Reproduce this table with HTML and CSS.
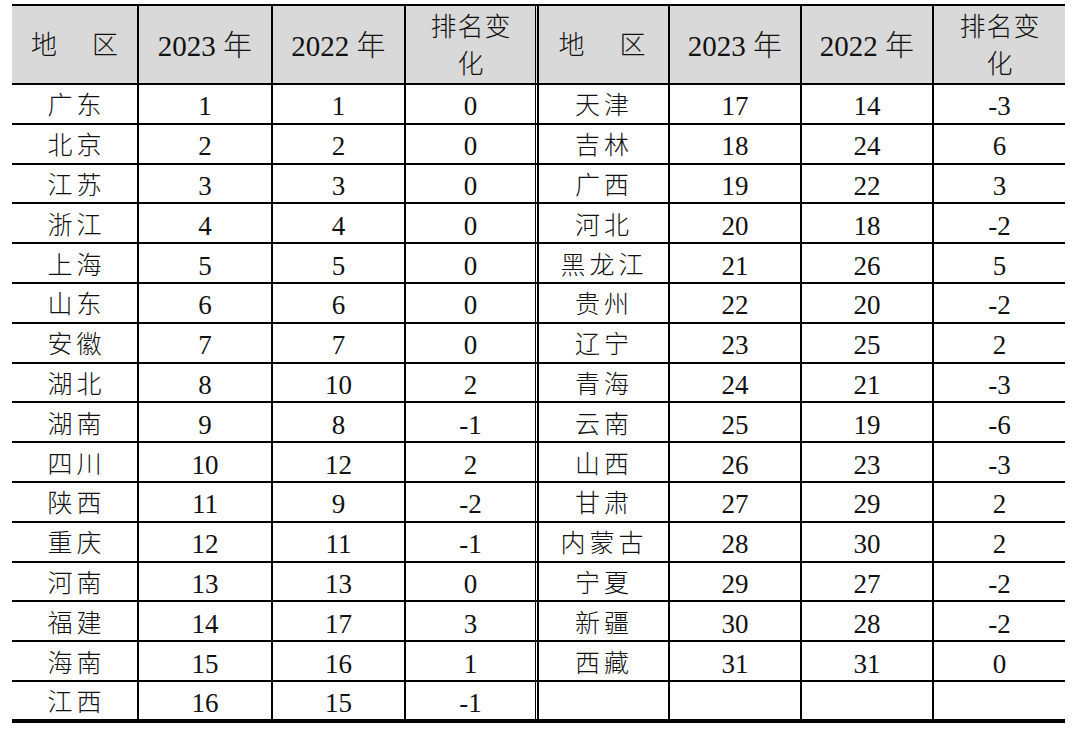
FILE: index.html
```html
<!DOCTYPE html>
<html lang="zh-CN">
<head>
<meta charset="utf-8">
<title>排名变化</title>
<link rel="stylesheet" href="styles.css">
</head>
<body>
<table class="rank">
<colgroup>
<col class="c1"><col class="c2"><col class="c3"><col class="c4"><col class="c5"><col class="c6"><col class="c7"><col class="c8">
</colgroup>
<thead>
<tr>
<th class="area-h">地<span class="gap"></span>区</th><th>2023 年</th><th>2022 年</th><th class="chg-h">排名变<br>化</th>
<th class="area-h">地<span class="gap"></span>区</th><th>2023 年</th><th>2022 年</th><th class="chg-h">排名变<br>化</th>
</tr>
</thead>
<tbody>
<tr><td class="area">广东</td><td>1</td><td>1</td><td>0</td><td class="area">天津</td><td>17</td><td>14</td><td>-3</td></tr>
<tr><td class="area">北京</td><td>2</td><td>2</td><td>0</td><td class="area">吉林</td><td>18</td><td>24</td><td>6</td></tr>
<tr><td class="area">江苏</td><td>3</td><td>3</td><td>0</td><td class="area">广西</td><td>19</td><td>22</td><td>3</td></tr>
<tr><td class="area">浙江</td><td>4</td><td>4</td><td>0</td><td class="area">河北</td><td>20</td><td>18</td><td>-2</td></tr>
<tr><td class="area">上海</td><td>5</td><td>5</td><td>0</td><td class="area">黑龙江</td><td>21</td><td>26</td><td>5</td></tr>
<tr><td class="area">山东</td><td>6</td><td>6</td><td>0</td><td class="area">贵州</td><td>22</td><td>20</td><td>-2</td></tr>
<tr><td class="area">安徽</td><td>7</td><td>7</td><td>0</td><td class="area">辽宁</td><td>23</td><td>25</td><td>2</td></tr>
<tr><td class="area">湖北</td><td>8</td><td>10</td><td>2</td><td class="area">青海</td><td>24</td><td>21</td><td>-3</td></tr>
<tr><td class="area">湖南</td><td>9</td><td>8</td><td>-1</td><td class="area">云南</td><td>25</td><td>19</td><td>-6</td></tr>
<tr><td class="area">四川</td><td>10</td><td>12</td><td>2</td><td class="area">山西</td><td>26</td><td>23</td><td>-3</td></tr>
<tr><td class="area">陕西</td><td>11</td><td>9</td><td>-2</td><td class="area">甘肃</td><td>27</td><td>29</td><td>2</td></tr>
<tr><td class="area">重庆</td><td>12</td><td>11</td><td>-1</td><td class="area">内蒙古</td><td>28</td><td>30</td><td>2</td></tr>
<tr><td class="area">河南</td><td>13</td><td>13</td><td>0</td><td class="area">宁夏</td><td>29</td><td>27</td><td>-2</td></tr>
<tr><td class="area">福建</td><td>14</td><td>17</td><td>3</td><td class="area">新疆</td><td>30</td><td>28</td><td>-2</td></tr>
<tr><td class="area">海南</td><td>15</td><td>16</td><td>1</td><td class="area">西藏</td><td>31</td><td>31</td><td>0</td></tr>
<tr class="end"><td class="area">江西</td><td>16</td><td>15</td><td>-1</td><td class="area"></td><td></td><td></td><td></td></tr>
</tbody>
</table>
</body>
</html>
```
FILE: styles.css
```css
html, body {
  margin: 0;
  padding: 0;
  background: #ffffff;
}

.rank {
  margin: 4px 0 0 12px;
  width: 1053px;
  table-layout: fixed;
  border-collapse: separate;
  border-spacing: 0;
  font-family: "Liberation Serif", "Noto Sans CJK SC", serif;
  font-weight: 300;
  color: #111111;
}

.c1 { width: 127px; }
.c2 { width: 134px; }
.c3 { width: 133px; }
.c4 { width: 130px; }
.c5 { width: 134px; }
.c6 { width: 132px; }
.c7 { width: 132px; }
.c8 { width: 131px; }

.rank th,
.rank td {
  box-sizing: border-box;
  padding: 0;
  text-align: center;
  vertical-align: middle;
  border-right: 2px solid #000;
  border-bottom: 2px solid #000;
  white-space: nowrap;
}

.rank th:nth-child(4),
.rank td:nth-child(4) {
  border-right-width: 1px;
}

.rank th:nth-child(5),
.rank td:nth-child(5) {
  background-image: linear-gradient(to right, transparent 1px, #000 1px, #000 3px, transparent 3px);
  background-repeat: no-repeat;
}

.rank th:nth-child(8),
.rank td:nth-child(8) {
  border-right: 0;
}

.rank thead tr {
  height: 81px;
}

.rank th {
  background-color: #d9d9d9;
  border-top: 2px solid #000;
  font-weight: 300;
  font-size: 29px;
  line-height: 32px;
  padding-top: 2px;
}

.rank th.area-h {
  font-size: 26px;
}

.gap {
  display: inline-block;
  width: 35px;
}

.rank th.chg-h {
  font-size: 26px;
  line-height: 37px;
  letter-spacing: 1px;
  padding-top: 2px;
  padding-left: 1px;
}

.rank tbody tr {
  height: 39.8px;
}

.rank td {
  font-size: 27px;
  line-height: 30px;
  padding-top: 5px;
}

.rank td.area {
  font-size: 25px;
  letter-spacing: 4px;
  padding-left: 4px;
}

.rank tr.end {
  height: 41px;
}

.rank tr.end td {
  border-bottom-width: 4px;
}
```
